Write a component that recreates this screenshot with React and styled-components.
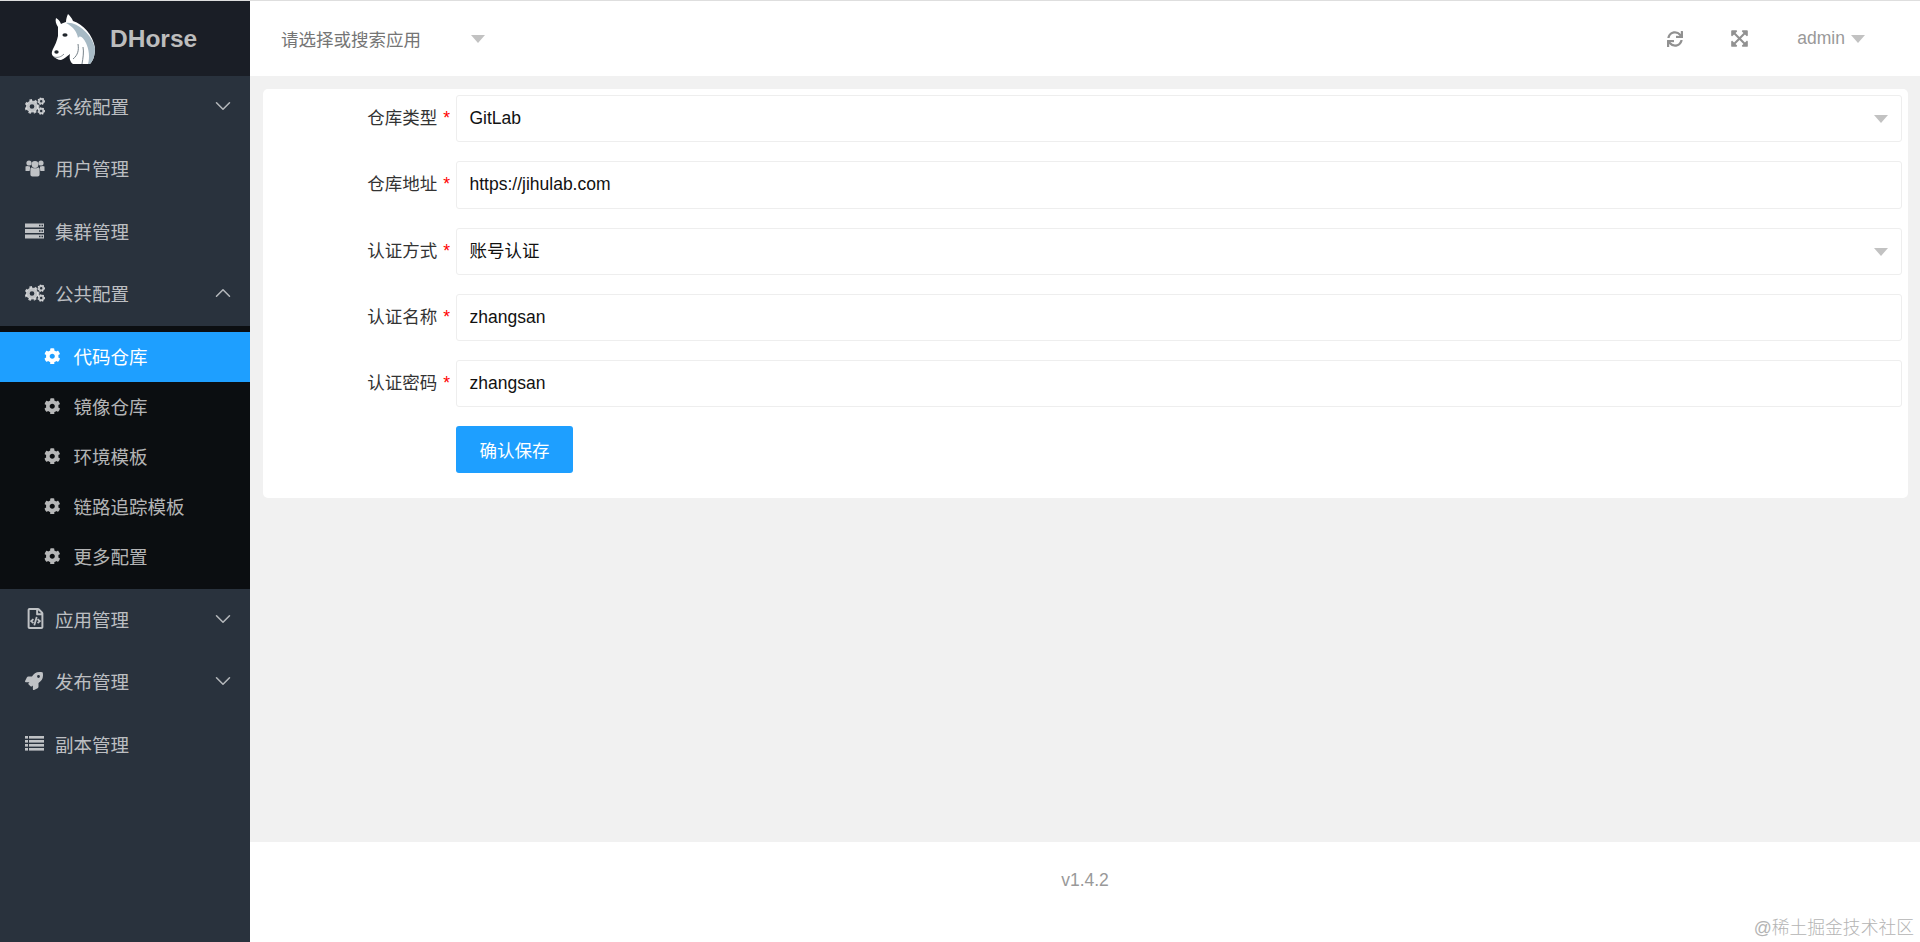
import React from 'react';
import styled, { createGlobalStyle } from 'styled-components';
import {
  FaCog,
  FaRegFileCode,
  FaRocket,
  FaSync,
  FaExpandArrowsAlt,
} from 'react-icons/fa';
import { FiChevronDown, FiChevronUp } from 'react-icons/fi';

const GlobalStyle = createGlobalStyle`
  html, body {
    margin: 0;
    padding: 0;
    height: 100%;
    overflow: hidden;
  }
  * {
    box-sizing: border-box;
  }
  body {
    font-family: "Liberation Sans", "Noto Sans CJK SC", sans-serif;
  }
`;

const HorseLogo = () => (
  <svg width="46" height="52" viewBox="0 0 46 52">
    <path
      d="M6 4 C8 5 10 7 11 10 C13 9 15 8 16 8 C16 5 17 2 18 0 C20 2 22 4 23 7 C33 10 43 21 45 34 C45 42 43 47 40 50 L23 50 C20 48 19 44 20 40 C17 42 14 45 11 46 C8 46 5 44 3 42 C1 40 2 37 3 35 C5 31 7 27 8 22 C8 18 8 15 8 13 C6 10 5 7 6 4 Z"
      fill="#fff"
    />
    <path
      d="M16 9 C26 7 42 20 45 34 C45 42 43 47 40 50 L38 50 C40 44 39 35 36 29 C33 23 30 21 28 24 C27 17 22 12 16 9 Z"
      fill="#a7bac5"
    />
    <path d="M28 30 C29 36 28 41 23 45 M33 33 C34 38 33 44 32 50" stroke="#66737c" strokeWidth="0.9" fill="none" />
    <ellipse cx="15" cy="21" rx="2.6" ry="1.8" fill="#20262c" />
    <ellipse cx="6.5" cy="38" rx="2.2" ry="1.7" fill="#20262c" />
    <path d="M4 43 C8 44 11 43 14 40" stroke="#6b747b" strokeWidth="0.8" fill="none" />
  </svg>
);

const Gear = ({ cx, cy, r }) => {
  const teeth = (2 * Math.PI * r) / 16;
  return (
    <g fill="none" stroke="currentColor">
      <circle cx={cx} cy={cy} r={r * 0.62} strokeWidth={r * 0.55} />
      <circle cx={cx} cy={cy} r={r * 0.94} strokeWidth={r * 0.3} strokeDasharray={`${teeth} ${teeth}`} />
    </g>
  );
};

const CogsIcon = () => (
  <svg width="20" height="18" viewBox="0 0 20 18">
    <Gear cx={7} cy={9.5} r={6.8} />
    <Gear cx={16.2} cy={4.2} r={3.5} />
    <Gear cx={16.2} cy={14} r={3.5} />
  </svg>
);

const UsersIcon = () => (
  <svg width="20" height="18" viewBox="0 0 20 18" fill="currentColor">
    <circle cx="4" cy="4" r="2.6" />
    <circle cx="16" cy="4" r="2.6" />
    <circle cx="10" cy="5.5" r="3.4" />
    <path d="M0.5 7.5 C1.5 6.8 3 6.8 5 7.6 C5 9.2 5 11 4.6 12 L0.5 12 Z" />
    <path d="M19.5 7.5 C18.5 6.8 17 6.8 15 7.6 C15 9.2 15 11 15.4 12 L19.5 12 Z" />
    <path d="M5.4 10 C5.4 9 6 8.4 7 8.4 C8.5 9.6 11.5 9.6 13 8.4 C14 8.4 14.6 9 14.6 10 L14.6 15.5 C14.6 16.8 13.8 17.5 12.5 17.5 L7.5 17.5 C6.2 17.5 5.4 16.8 5.4 15.5 Z" />
  </svg>
);

const ServerIcon = () => (
  <svg width="19" height="16" viewBox="0 0 19 16" fill="currentColor">
    <path fillRule="evenodd" d="M0 0.5 H19 V4.5 H0 Z M14 1.8 V3.2 H15.5 V1.8 Z M16.5 1.8 V3.2 H18 V1.8 Z" />
    <path fillRule="evenodd" d="M0 6 H19 V10 H0 Z M14 7.3 V8.7 H15.5 V7.3 Z M16.5 7.3 V8.7 H18 V7.3 Z" />
    <path fillRule="evenodd" d="M0 11.5 H19 V15.5 H0 Z M14 12.8 V14.2 H15.5 V12.8 Z M16.5 12.8 V14.2 H18 V12.8 Z" />
  </svg>
);

const ListIcon = () => (
  <svg width="19" height="15" viewBox="0 0 19 15" fill="currentColor">
    <rect x="0" y="0" width="3" height="2.6" />
    <rect x="4" y="0" width="15" height="2.6" />
    <rect x="0" y="4" width="3" height="2.6" />
    <rect x="4" y="4" width="15" height="2.6" />
    <rect x="0" y="8" width="3" height="2.6" />
    <rect x="4" y="8" width="15" height="2.6" />
    <rect x="0" y="12" width="3" height="2.6" />
    <rect x="4" y="12" width="15" height="2.6" />
  </svg>
);

const FileIcon = () => <FaRegFileCode size={21} />;
const RocketIcon = () => <FaRocket size={18} />;

const menuTop = [
  { label: '系统配置', Icon: CogsIcon, arrow: 'down' },
  { label: '用户管理', Icon: UsersIcon },
  { label: '集群管理', Icon: ServerIcon },
  { label: '公共配置', Icon: CogsIcon, arrow: 'up' },
];

const subMenu = ['代码仓库', '镜像仓库', '环境模板', '链路追踪模板', '更多配置'];

const menuBottom = [
  { label: '应用管理', Icon: FileIcon, arrow: 'down' },
  { label: '发布管理', Icon: RocketIcon, arrow: 'down' },
  { label: '副本管理', Icon: ListIcon },
];

const fields = [
  { label: '仓库类型', value: 'GitLab', select: true },
  { label: '仓库地址', value: 'https://jihulab.com' },
  { label: '认证方式', value: '账号认证', select: true },
  { label: '认证名称', value: 'zhangsan' },
  { label: '认证密码', value: 'zhangsan' },
];

const MenuEntry = ({ item }) => (
  <MenuItem>
    <MenuIcon><item.Icon /></MenuIcon>
    <MenuLabel>{item.label}</MenuLabel>
    {item.arrow === 'down' && <MenuArrow><FiChevronDown strokeWidth={1.4} /></MenuArrow>}
    {item.arrow === 'up' && <MenuArrow><FiChevronUp strokeWidth={1.4} /></MenuArrow>}
  </MenuItem>
);

const App = () => (
  <Page>
    <GlobalStyle />
    <Sidebar>
      <LogoBar>
        <LogoMark><HorseLogo /></LogoMark>
        <LogoText>DHorse</LogoText>
      </LogoBar>
      {menuTop.map(item => <MenuEntry key={item.label} item={item} />)}
      <SubMenu>
        {subMenu.map((label, i) => (
          <SubItem key={label} active={i === 0 ? 1 : 0}>
            <SubIcon><FaCog /></SubIcon>
            {label}
          </SubItem>
        ))}
      </SubMenu>
      {menuBottom.map(item => <MenuEntry key={item.label} item={item} />)}
    </Sidebar>
    <Content>
      <Header>
        <AppPicker>
          <Placeholder>请选择或搜索应用</Placeholder>
          <Caret />
        </AppPicker>
        <HeaderTools>
          <ToolIcon size={16} boxWidth={63}><FaSync /></ToolIcon>
          <ToolIcon size={19} boxWidth={67}><FaExpandArrowsAlt /></ToolIcon>
          <UserName>admin</UserName>
          <Caret />
        </HeaderTools>
      </Header>
      <Main>
        <Card>
          {fields.map(field => (
            <FormRow key={field.label}>
              <FieldLabel>
                {field.label}
                <Required>*</Required>
              </FieldLabel>
              <FieldBox>
                {field.value}
                {field.select && <SelectCaret><Caret /></SelectCaret>}
              </FieldBox>
            </FormRow>
          ))}
          <ButtonRow>
            <SaveButton>确认保存</SaveButton>
          </ButtonRow>
        </Card>
      </Main>
      <Footer>v1.4.2</Footer>
    </Content>
    <Watermark>@稀土掘金技术社区</Watermark>
  </Page>
);

const Page = styled.div`
  position: relative;
  display: flex;
  width: 100%;
  height: 942px;
  border-top: 1px solid #dedede;
  background-color: #f1f1f1;
`;

const Sidebar = styled.div`
  width: 250px;
  flex-shrink: 0;
  background-color: #29323d;
`;

const LogoBar = styled.div`
  height: 75px;
  padding-left: 50px;
  display: flex;
  align-items: center;
  gap: 14px;
  background-color: #1a1e26;
`;

const LogoMark = styled.span`
  display: flex;
  margin-top: 3px;
`;

const LogoText = styled.span`
  font-size: 24.5px;
  font-weight: bold;
  color: #bdbdbd;
`;

const MenuItem = styled.div`
  height: 62.5px;
  padding: 0 14.5px 3px 25px;
  display: flex;
  align-items: center;
  color: rgba(255, 255, 255, 0.7);
  font-size: 18.5px;
`;

const MenuIcon = styled.span`
  width: 30px;
  display: flex;
  align-items: center;
`;

const MenuLabel = styled.span`
  flex: 1;
`;

const MenuArrow = styled.span`
  display: flex;
  font-size: 26px;
  color: rgba(255, 255, 255, 0.65);
`;

const SubMenu = styled.div`
  padding: 6px 0 7px;
  background-color: #0b0e11;
`;

const SubItem = styled.div`
  height: 50px;
  padding: 0 0 2px 44px;
  display: flex;
  align-items: center;
  font-size: 18.5px;
  color: ${props => props.active ? '#fff' : 'rgba(255, 255, 255, 0.7)'};
  background-color: ${props => props.active ? '#1e9fff' : 'transparent'};
`;

const SubIcon = styled.span`
  width: 29.5px;
  display: flex;
  align-items: center;
  font-size: 16.5px;
`;

const Content = styled.div`
  flex: 1;
  min-width: 0;
  display: flex;
  flex-direction: column;
`;

const Header = styled.div`
  height: 75px;
  padding: 0 55px 0 31px;
  display: flex;
  align-items: center;
  justify-content: space-between;
  background-color: #fff;
`;

const AppPicker = styled.div`
  display: flex;
  align-items: center;
  gap: 50px;
`;

const Placeholder = styled.span`
  font-size: 17.5px;
  color: #757575;
`;

const Caret = styled.span`
  display: block;
  width: 0;
  height: 0;
  border-left: 7px solid transparent;
  border-right: 7px solid transparent;
  border-top: 8px solid #c2c2c2;
`;

const HeaderTools = styled.div`
  display: flex;
  align-items: center;
  color: #999;
`;

const ToolIcon = styled.span`
  display: flex;
  width: ${props => props.boxWidth}px;
  font-size: ${props => props.size}px;
  color: #919191;
`;

const UserName = styled.span`
  font-size: 17.5px;
  margin-right: 6px;
`;

const Main = styled.div`
  flex: 1;
  padding: 13px 12.5px;
`;

const Card = styled.div`
  padding: 6px 6px 25px 0;
  background-color: #fff;
  border-radius: 5px;
`;

const FormRow = styled.div`
  display: flex;
  margin-bottom: 19px;
`;

const FieldLabel = styled.div`
  width: 193.5px;
  padding-right: 6px;
  text-align: right;
  line-height: 47px;
  font-size: 17.5px;
  color: #333;
`;

const Required = styled.span`
  margin-left: 6px;
  color: #f00;
`;

const FieldBox = styled.div`
  position: relative;
  flex: 1;
  height: 47.25px;
  padding-left: 12.5px;
  line-height: 45.5px;
  font-size: 17.5px;
  color: #111;
  background-color: #fff;
  border: 1px solid #eee;
  border-radius: 3px;
`;

const SelectCaret = styled.span`
  position: absolute;
  right: 13px;
  top: 19px;
`;

const ButtonRow = styled.div`
  padding-left: 193.5px;
`;

const SaveButton = styled.button`
  display: block;
  width: 117px;
  height: 47px;
  padding: 0;
  border: none;
  border-radius: 3px;
  font-family: inherit;
  font-size: 17.5px;
  color: #fff;
  background-color: #1e9fff;
`;

const Footer = styled.div`
  height: 100px;
  padding-bottom: 24px;
  display: flex;
  align-items: center;
  justify-content: center;
  font-size: 17.5px;
  color: #999;
  background-color: #fff;
`;

const Watermark = styled.div`
  position: absolute;
  right: 6px;
  bottom: 3px;
  font-size: 17.8px;
  font-weight: 300;
  color: #b4b4b4;
`;

export default App;
